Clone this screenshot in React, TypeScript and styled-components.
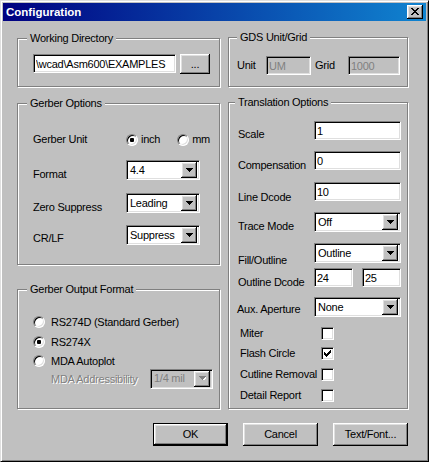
import React from 'react';
import styled, { createGlobalStyle, css } from 'styled-components';

const Global = createGlobalStyle`
  html, body { margin: 0; padding: 0; background: #c0c0c0; }
  body {
    font-family: "Liberation Sans", Arial, sans-serif;
    font-size: 11px;
    color: #000;
    letter-spacing: -0.25px;
  }
  * { box-sizing: border-box; }
`;

const sunken = css`
  border: 1px solid;
  border-color: #808080 #fff #fff #808080;
  box-shadow: inset 1px 1px 0 #000, inset -1px -1px 0 #dfdfdf;
`;

const raised = css`
  box-shadow: inset -1px -1px 0 #000, inset 1px 1px 0 #fff,
    inset -2px -2px 0 #808080, inset 2px 2px 0 #dfdfdf;
`;

const Window = styled.div`
  width: 429px;
  height: 462px;
  background: #c0c0c0;
  border: 1px solid;
  border-color: #dfdfdf #000 #000 #dfdfdf;
  box-shadow: inset 1px 1px 0 #fff, inset -1px -1px 0 #808080;
  padding: 2px;
  display: flex;
  flex-direction: column;
`;

const TitleBar = styled.div`
  height: 18px;
  flex: none;
  display: flex;
  align-items: center;
  justify-content: space-between;
  padding: 0 3px 0 3px;
  background: linear-gradient(to right, #000080, #1084d0);
`;

const Title = styled.span`
  color: #fff;
  font-weight: bold;
  font-size: 11.5px;
  letter-spacing: 0;
  line-height: 14px;
`;

const CloseButton = styled.div`
  width: 16px;
  height: 14px;
  background: #c0c0c0;
  ${raised};
  display: flex;
  align-items: center;
  justify-content: center;
  padding: 0 0 1px 0;
`;

const Body = styled.div`
  display: flex;
  flex-direction: column;
  padding: 0 18px 0 14px;
`;

const Columns = styled.div`
  display: grid;
  grid-template-columns: 203px 180px;
  column-gap: 8px;
  align-items: start;
`;

const Column = styled.div`
  display: flex;
  flex-direction: column;
`;

const Group = styled.div<{ $h: number; $mt: number; $pl: number }>`
  height: ${(p) => p.$h}px;
  margin-top: ${(p) => p.$mt}px;
  padding-left: ${(p) => p.$pl}px;
  border: 1px solid #808080;
  box-shadow: inset 1px 1px 0 #fff, 1px 1px 0 #fff;
  display: flex;
  flex-direction: column;
`;

const Legend = styled.div<{ $ml: number }>`
  align-self: flex-start;
  height: 13px;
  line-height: 13px;
  margin: -7px 0 0 ${(p) => p.$ml}px;
  padding: 0 3px;
  background: #c0c0c0;
  white-space: nowrap;
`;

const Row = styled.div<{ $mt: number; $h: number; $pl?: number; $top?: boolean }>`
  display: flex;
  align-items: ${(p) => (p.$top ? 'flex-start' : 'center')};
  flex: none;
  height: ${(p) => p.$h}px;
  margin-top: ${(p) => p.$mt}px;
  padding-left: ${(p) => p.$pl ?? 0}px;
`;

const Label = styled.span<{ $w?: number; $dy?: number; $disabled?: boolean; $ml?: number }>`
  flex: none;
  width: ${(p) => (p.$w ? `${p.$w}px` : 'auto')};
  margin-left: ${(p) => p.$ml ?? 0}px;
  line-height: 13px;
  white-space: nowrap;
  margin-top: ${(p) => (p.$dy ?? 0) * 2}px;
  ${(p) =>
    p.$disabled &&
    css`
      color: #808080;
      text-shadow: 1px 1px 0 #fff;
    `}
`;

const TextBox = styled.input<{ $w: number; $h: number }>`
  width: ${(p) => p.$w}px;
  height: ${(p) => p.$h}px;
  flex: none;
  margin: 0;
  padding: 0 0 0 2px;
  font: inherit;
  letter-spacing: inherit;
  color: #000;
  background: #fff;
  outline: none;
  ${sunken};
  &:disabled {
    background: #c0c0c0;
    color: #808080;
  }
`;

const PushButton = styled.div<{ $w: number; $h: number; $default?: boolean }>`
  width: ${(p) => p.$w}px;
  height: ${(p) => p.$h}px;
  flex: none;
  display: flex;
  align-items: center;
  justify-content: center;
  background: #c0c0c0;
  line-height: 13px;
  ${(p) =>
    p.$default
      ? css`
          border: 1px solid #000;
          box-shadow: inset -1px -1px 0 #000, inset 1px 1px 0 #fff,
            inset -2px -2px 0 #808080, inset 2px 2px 0 #dfdfdf;
        `
      : raised};
`;

const SelectBox = styled.div<{ $w: number; $disabled?: boolean }>`
  width: ${(p) => p.$w}px;
  height: 20px;
  flex: none;
  display: flex;
  align-items: center;
  background: ${(p) => (p.$disabled ? '#c0c0c0' : '#fff')};
  color: ${(p) => (p.$disabled ? '#808080' : '#000')};
  ${sunken};
  padding: 2px;
`;

const SelectText = styled.span`
  flex: 1;
  padding-left: 1px;
  line-height: 13px;
  white-space: nowrap;
  overflow: hidden;
`;

const ArrowButton = styled.div`
  width: 16px;
  height: 16px;
  flex: none;
  display: flex;
  align-items: center;
  justify-content: center;
  background: #c0c0c0;
  ${raised};
`;

const RadioOption = styled.div<{ $ml?: number; $gap: number }>`
  display: flex;
  align-items: center;
  gap: ${(p) => p.$gap}px;
  margin-left: ${(p) => p.$ml ?? 0}px;
  line-height: 13px;
  white-space: nowrap;
`;

const RadioCircle = styled.span<{ $checked?: boolean }>`
  width: 12px;
  height: 12px;
  flex: none;
  border-radius: 50%;
  border: 1px solid;
  border-color: #808080 #fff #fff #808080;
  box-shadow: inset 1px 1px 0 #000, inset -1px -1px 0 #dfdfdf;
  background: #fff;
  display: flex;
  align-items: center;
  justify-content: center;
  &::after {
    content: '';
    width: 4px;
    height: 4px;
    border-radius: 1px;
    background: ${(p) => (p.$checked ? '#000' : 'transparent')};
  }
`;

const CheckBox = styled.span`
  width: 13px;
  height: 13px;
  flex: none;
  background: #fff;
  ${sunken};
  display: flex;
  align-items: center;
  justify-content: center;
`;

const ButtonRow = styled.div`
  display: flex;
  justify-content: flex-end;
  gap: 15px;
  margin-top: 14px;
`;

const Arrow = ({ disabled }: { disabled?: boolean }) => (
  <svg width="8" height="5" viewBox="0 0 8 5" shapeRendering="crispEdges">
    {disabled && <path d="M2 1h7L5.5 4.5z" fill="#fff" />}
    <path d="M0.5 0h7v1h-1v1h-1v1h-1v1h-1V3h-1V2h-1V1h-1z" fill={disabled ? '#808080' : '#000'} />
  </svg>
);

const Select = ({ w, value, disabled }: { w: number; value: string; disabled?: boolean }) => (
  <SelectBox $w={w} $disabled={disabled}>
    <SelectText>{value}</SelectText>
    <ArrowButton>
      <Arrow disabled={disabled} />
    </ArrowButton>
  </SelectBox>
);

const Radio = ({ label, checked, gap, ml }: { label: string; checked?: boolean; gap: number; ml?: number }) => (
  <RadioOption $gap={gap} $ml={ml}>
    <RadioCircle $checked={checked} />
    <span>{label}</span>
  </RadioOption>
);

const CheckMark = () => (
  <svg width="7" height="7" viewBox="0 0 7 7" shapeRendering="crispEdges">
    <path d="M6 0h1v3h-1v1h-1v1h-1v1h-1v1h-1v-1h-1v-1h-1v-3h1v1h1v1h1v-1h1v-1h1v-1h1z" fill="#000" />
  </svg>
);

const CloseGlyph = () => (
  <svg width="8" height="7" viewBox="0 0 8 7" shapeRendering="crispEdges">
    <path
      d="M0 0h2v1h1v1h2V1h1V0h2v1H7v1H6v1H5v1h1v1h1v1h1v1H6V6H5V5H3v1H2v1H0V6h1V5h1V4h1V3H2V2H1V1H0z"
      fill="#000"
    />
  </svg>
);

const CheckRow = ({ label, checked, mt }: { label: string; checked?: boolean; mt: number }) => (
  <Row $mt={mt} $h={13} $pl={2}>
    <Label $w={81}>{label}</Label>
    <CheckBox>{checked && <CheckMark />}</CheckBox>
  </Row>
);

export default function App() {
  return (
    <>
      <Global />
      <Window>
        <TitleBar>
          <Title>Configuration</Title>
          <CloseButton aria-label="Close">
            <CloseGlyph />
          </CloseButton>
        </TitleBar>
        <Body>
          <Columns>
            <Column>
              <Group $h={49} $mt={17} $pl={15}>
                <Legend $ml={-6}>Working Directory</Legend>
                <Row $mt={9} $h={20} $top>
                  <TextBox $w={143} $h={19} readOnly defaultValue="\wcad\Asm600\EXAMPLES" />
                  <PushButton $w={30} $h={20} style={{ marginLeft: 4 }}>
                    ...
                  </PushButton>
                </Row>
              </Group>

              <Group $h={162} $mt={16} $pl={15}>
                <Legend $ml={-6}>Gerber Options</Legend>
                <Row $mt={19} $h={21}>
                  <Label $w={93}>Gerber Unit</Label>
                  <Radio label="inch" checked gap={3} />
                  <Radio label="mm" gap={3} ml={17} />
                </Row>
                <Row $mt={10} $h={20}>
                  <Label $w={93} $dy={4.5}>Format</Label>
                  <Select w={74} value="4.4" />
                </Row>
                <Row $mt={13} $h={20}>
                  <Label $w={93} $dy={4}>Zero Suppress</Label>
                  <Select w={74} value="Leading" />
                </Row>
                <Row $mt={12} $h={20}>
                  <Label $w={93} $dy={3.5}>CR/LF</Label>
                  <Select w={74} value="Suppress" />
                </Row>
              </Group>

              <Group $h={120} $mt={24} $pl={15}>
                <Legend $ml={-6}>Gerber Output Format</Legend>
                <Row $mt={19} $h={14}>
                  <Radio label="RS274D (Standard Gerber)" gap={6} />
                </Row>
                <Row $mt={6} $h={14}>
                  <Radio label="RS274X" checked gap={6} />
                </Row>
                <Row $mt={5} $h={14}>
                  <Radio label="MDA Autoplot" gap={6} />
                </Row>
                <Row $mt={0} $h={21} $pl={18}>
                  <Label $w={99} $disabled $dy={1}>
                    MDA Addressibility
                  </Label>
                  <Select w={63} value="1/4 mil" disabled />
                </Row>
              </Group>
            </Column>

            <Column>
              <Group $h={50} $mt={16} $pl={8}>
                <Legend $ml={0}>GDS Unit/Grid</Legend>
                <Row $mt={12} $h={19}>
                  <Label $w={29}>Unit</Label>
                  <TextBox $w={45} $h={19} disabled defaultValue="UM" />
                  <Label $w={33} $ml={4}>Grid</Label>
                  <TextBox $w={52} $h={19} disabled defaultValue="1000" />
                </Row>
              </Group>

              <Group $h={307} $mt={15} $pl={9}>
                <Legend $ml={-3}>Translation Options</Legend>
                <Row $mt={12} $h={19}>
                  <Label $w={76} $dy={4}>Scale</Label>
                  <TextBox $w={87} $h={19} readOnly defaultValue="1" />
                </Row>
                <Row $mt={11} $h={19}>
                  <Label $w={76} $dy={5}>Compensation</Label>
                  <TextBox $w={87} $h={19} readOnly defaultValue="0" />
                </Row>
                <Row $mt={12} $h={19}>
                  <Label $w={76} $dy={5.5}>Line Dcode</Label>
                  <TextBox $w={87} $h={19} readOnly defaultValue="10" />
                </Row>
                <Row $mt={11} $h={20}>
                  <Label $w={76} $dy={4}>Trace Mode</Label>
                  <Select w={87} value="Off" />
                </Row>
                <Row $mt={11} $h={20}>
                  <Label $w={76} $dy={7}>Fill/Outline</Label>
                  <Select w={87} value="Outline" />
                </Row>
                <Row $mt={5} $h={19}>
                  <Label $w={76} $dy={4.5}>Outline Dcode</Label>
                  <TextBox $w={39} $h={19} readOnly defaultValue="24" />
                  <TextBox $w={39} $h={19} readOnly defaultValue="25" style={{ marginLeft: 9 }} />
                </Row>
                <Row $mt={10} $h={20}>
                  <Label $w={77} $ml={-1} $dy={2}>Aux. Aperture</Label>
                  <Select w={87} value="None" />
                </Row>
                <CheckRow label="Miter" mt={10} />
                <CheckRow label="Flash Circle" checked mt={7} />
                <CheckRow label="Cutline Removal" mt={8} />
                <CheckRow label="Detail Report" mt={8} />
              </Group>
            </Column>
          </Columns>

          <ButtonRow>
            <PushButton $w={75} $h={23} $default>
              OK
            </PushButton>
            <PushButton $w={75} $h={23}>
              Cancel
            </PushButton>
            <PushButton $w={75} $h={23}>
              Text/Font...
            </PushButton>
          </ButtonRow>
        </Body>
      </Window>
    </>
  );
}
